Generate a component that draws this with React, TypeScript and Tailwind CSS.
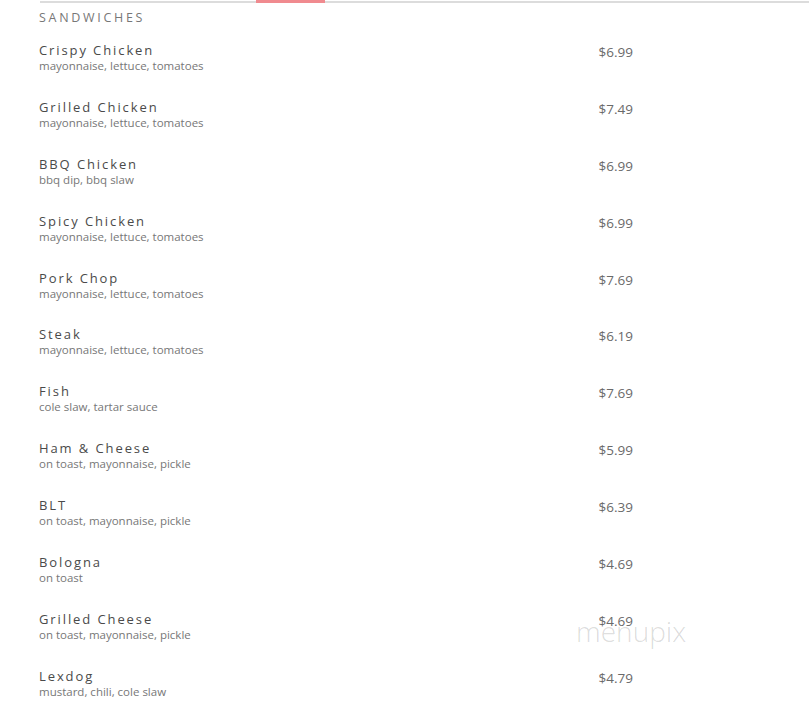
import React from "react";

const items = [
  { name: "Crispy Chicken", desc: "mayonnaise, lettuce, tomatoes", price: "$6.99" },
  { name: "Grilled Chicken", desc: "mayonnaise, lettuce, tomatoes", price: "$7.49" },
  { name: "BBQ Chicken", desc: "bbq dip, bbq slaw", price: "$6.99" },
  { name: "Spicy Chicken", desc: "mayonnaise, lettuce, tomatoes", price: "$6.99" },
  { name: "Pork Chop", desc: "mayonnaise, lettuce, tomatoes", price: "$7.69" },
  { name: "Steak", desc: "mayonnaise, lettuce, tomatoes", price: "$6.19" },
  { name: "Fish", desc: "cole slaw, tartar sauce", price: "$7.69" },
  { name: "Ham & Cheese", desc: "on toast, mayonnaise, pickle", price: "$5.99" },
  { name: "BLT", desc: "on toast, mayonnaise, pickle", price: "$6.39" },
  { name: "Bologna", desc: "on toast", price: "$4.69" },
  { name: "Grilled Cheese", desc: "on toast, mayonnaise, pickle", price: "$4.69" },
  { name: "Lexdog", desc: "mustard, chili, cole slaw", price: "$4.79" },
];

export default function App() {
  return (
    <div className="relative w-[809px] h-[714px] bg-white overflow-hidden font-['Open_Sans',sans-serif]">
      {/* tab underline */}
      <div className="flex h-[3px] pl-[40px]">
        <div className="w-[216px] h-[2px] mt-[1px] bg-[#dcdcdc]" />
        <div className="w-[69px] h-[3px] bg-[#f08a8f]" />
        <div className="flex-1 h-[2px] mt-[1px] bg-[#dcdcdc]" />
      </div>

      <div className="pl-[39px] w-[633px]">
        <h2 className="mt-[7px] text-[12.5px] leading-4 tracking-[2.7px] text-[#777]">
          SANDWICHES
        </h2>
        <div className="mt-[16px] flex flex-col gap-[24.9px]">
          {items.map((it) => (
            <div key={it.name} className="flex">
              <div className="flex-1">
                <div className="text-[13px] leading-4 tracking-[1.9px] text-[#4a4a4a]">{it.name}</div>
                <div className="text-[11.5px] leading-4 text-[#777]">{it.desc}</div>
              </div>
              <div className="pt-[2px] text-[13.5px] leading-4 text-[#6a6a6a]">{it.price}</div>
            </div>
          ))}
        </div>
      </div>

      {/* watermark */}
      <div className="absolute left-[576px] top-[610px] text-[28px] font-light text-[#000]/15 select-none">
        menupix
      </div>
    </div>
  );
}
